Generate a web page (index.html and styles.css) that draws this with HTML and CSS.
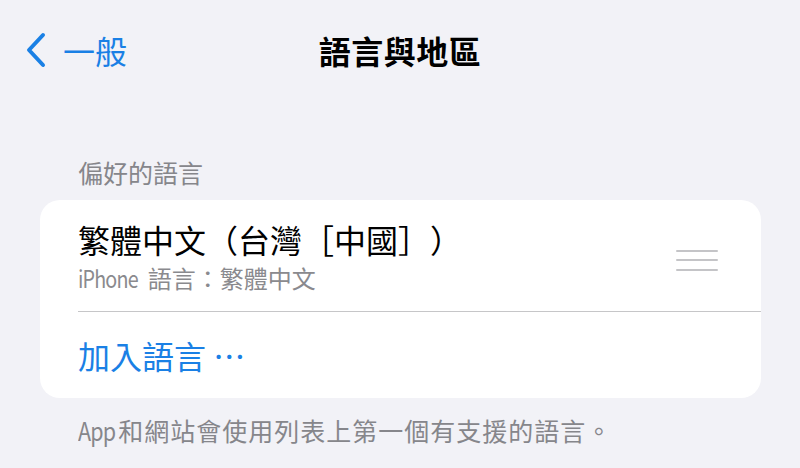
FILE: index.html
```html
<!DOCTYPE html>
<html lang="zh-Hant">
<head>
<meta charset="utf-8">
<link rel="stylesheet" href="styles.css">
</head>
<body>
<div class="nav">
  <div class="back">
    <svg class="chev" width="22" height="36" viewBox="0 0 22 36"><polyline points="18,3 4,18 18,33" fill="none" stroke="#1a80e5" stroke-width="4" stroke-linecap="round" stroke-linejoin="round"/></svg>
    <span class="back-label">一般</span>
  </div>
  <div class="title">語言與地區</div>
  <div></div>
</div>
<div class="section-header">偏好的語言</div>
<div class="card">
  <div class="row lang-row">
    <div class="lang-text">
      <div class="lang-name">繁體中文（台灣［中國］）</div>
      <div class="lang-sub"><span class="lat sub-lat">iPhone</span>語言：繁體中文</div>
    </div>
    <div class="grip"><span></span><span></span><span></span></div>
  </div>
  <div class="sep"></div>
  <div class="row add-row">加入語言 ⋯</div>
</div>
<div class="footer"><span class="lat foot-lat">App</span>和網站會使用列表上第一個有支援的語言。</div>
</body>
</html>
```
FILE: styles.css
```css
html, body {
  margin: 0;
  padding: 0;
}
body {
  background: #f2f2f7;
  font-family: "Noto Sans CJK TC", "Inter", sans-serif;
  width: 800px;
  height: 468px;
  overflow: hidden;
  text-spacing-trim: space-all;
}
.nav {
  height: 100px;
  display: grid;
  grid-template-columns: 1fr auto 1fr;
  align-items: center;
}
.back {
  display: flex;
  align-items: center;
  padding-left: 25px;
  color: #1a80e5;
  gap: 16px;
}
.chev {
  display: block;
}
.back-label {
  font-size: 32px;
  line-height: 40px;
}
.title {
  font-size: 32px;
  font-weight: 700;
  line-height: 40px;
  color: #000;
  letter-spacing: 0.5px;
}
.section-header {
  margin: 57px 0 13px 78px;
  font-size: 25px;
  line-height: 30px;
  color: #86868b;
}
.card {
  margin-left: 40px;
  width: 721px;
  background: #fff;
  border-radius: 20px;
  overflow: hidden;
}
.row {
  padding-left: 38px;
}
.lang-row {
  height: 111px;
  display: flex;
  align-items: center;
  justify-content: space-between;
  padding-right: 43px;
  box-sizing: border-box;
}
.lang-text {
  padding-top: 1px;
}
.lang-name {
  font-size: 32px;
  line-height: 38px;
  color: #000;
}
.lang-sub {
  margin-top: 6px;
  font-size: 24px;
  line-height: 28px;
  color: #8a8a8e;
}
.lat {
  display: inline-block;
  letter-spacing: -1px;
  transform-origin: left center;
}
.sub-lat {
  transform: scaleX(0.82);
  margin-right: -3px;
}
.foot-lat {
  transform: scaleX(0.86);
  margin-right: -3px;
}
.grip {
  width: 42px;
  display: flex;
  flex-direction: column;
  gap: 7.5px;
  margin-top: 9px;
}
.grip span {
  display: block;
  height: 2px;
  background: #c4c4c7;
  border-radius: 1px;
}
.sep {
  margin-left: 38px;
  height: 1px;
  background: #c6c6c8;
}
.add-row {
  height: 86px;
  display: flex;
  align-items: center;
  font-size: 32px;
  color: #1a80e5;
}
.footer {
  margin: 17px 0 0 78px;
  font-size: 25px;
  line-height: 30px;
  color: #86868b;
  letter-spacing: 1px;
}
.footer .lat {
  letter-spacing: -1px;
}
```
